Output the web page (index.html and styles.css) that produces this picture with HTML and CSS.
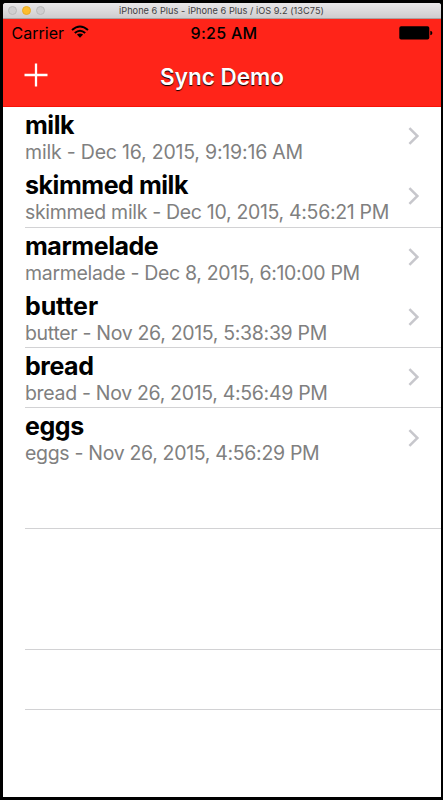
FILE: index.html
```
<!DOCTYPE html>
<html lang="en">
<head>
<meta charset="utf-8">
<title>Sync Demo</title>
<link rel="stylesheet" href="styles.css">
</head>
<body>
<svg class="defs" width="0" height="0"><defs><symbol id="chevron" viewBox="0 0 12 20"><path d="M1.4 2.1 9.4 10 1.4 17.9" fill="none" stroke="#c7c7cc" stroke-width="2.5"/></symbol></defs></svg>
<div class="window">
  <div class="titlebar">
    <div class="lights"><i></i><i class="amber"></i><i></i></div>
    <span class="window-title">iPhone 6 Plus - iPhone 6 Plus / iOS 9.2 (13C75)</span>
  </div>
  <header class="header">
    <div class="status">
      <div class="carrier"><span>Carrier</span>
        <svg width="18" height="14" viewBox="0 0 18 14"><g fill="none" stroke="#000" stroke-width="2"><path d="M1 5.1Q9-2 17 5.1"/><path d="M3.8 8.1Q9 3.5 14.2 8.1"/></g><path d="M5.9 9.6Q9 7.2 12.1 9.6L9 12.8Z"/></svg>
      </div>
      <span class="time">9:25 AM</span>
      <svg class="battery" width="34" height="14" viewBox="0 0 34 14"><rect x=".3" y=".3" width="30" height="13.2" rx="1.8"/><path d="M31.3 4.8Q33.4 5.2 33.4 7T31.3 9.2Z"/></svg>
    </div>
    <div class="nav">
      <svg class="add" width="24" height="24" viewBox="0 0 24 24"><path d="M.5 12H23.5M12 .5V23.5" stroke="#fff" stroke-width="2.3"/></svg>
      <h1>Sync Demo</h1>
    </div>
  </header>
  <main class="list">
    <div class="row"><div class="text"><h2>milk</h2><p class="loose">milk - Dec 16, 2015, 9:19:16 AM</p></div><svg class="chevron"><use href="#chevron"/></svg></div>
    <div class="row ruled"><div class="text"><h2>skimmed milk</h2><p>skimmed milk - Dec 10, 2015, 4:56:21 PM</p></div><svg class="chevron"><use href="#chevron"/></svg></div>
    <div class="row"><div class="text"><h2>marmelade</h2><p>marmelade - Dec 8, 2015, 6:10:00 PM</p></div><svg class="chevron"><use href="#chevron"/></svg></div>
    <div class="row ruled"><div class="text"><h2 class="loose">butter</h2><p>butter - Nov 26, 2015, 5:38:39 PM</p></div><svg class="chevron"><use href="#chevron"/></svg></div>
    <div class="row ruled"><div class="text"><h2>bread</h2><p>bread - Nov 26, 2015, 4:56:49 PM</p></div><svg class="chevron"><use href="#chevron"/></svg></div>
    <div class="row"><div class="text"><h2>eggs</h2><p>eggs - Nov 26, 2015, 4:56:29 PM</p></div><svg class="chevron"><use href="#chevron"/></svg></div>
    <div class="row ruled"></div>
    <div class="row"></div>
    <div class="row ruled"></div>
    <div class="row ruled"></div>
  </main>
</div>
</body>
</html>
```
FILE: styles.css
```
* { box-sizing: border-box; }
body { margin: 0; height: 800px; padding: 3px 2px 3px 3px; background: #000; font-family: Inter, "Liberation Sans", sans-serif; overflow: hidden; }
.defs { position: absolute; }
.window { height: 794px; background: #fff; border-radius: 3px 3px 0 0; overflow: hidden; }
.titlebar { height: 16px; display: grid; grid-template-columns: 116px 1fr; align-items: center; background: linear-gradient(#e9e7e9, #cfcdcf); border-bottom: 1px solid #aaa0a1; }
.lights { display: flex; gap: 5px; padding-left: 5px; }
.lights i { width: 9px; height: 9px; border-radius: 50%; background: #d0ced0; border: 1px solid #bbb9bb; }
.lights .amber { background: #fdbd2e; border-color: #e9ab29; }
.window-title { font-size: 9.2px; line-height: 15px; color: #414041; white-space: nowrap; letter-spacing: 0.03px; }
.header { height: 88px; background: #ff2419; border-bottom: 1px solid #f71308; }
.status { height: 28px; display: grid; grid-template-columns: 1fr auto 1fr; align-items: center; padding: 0 8px; font-size: 16px; line-height: 28px; color: #000; }
.carrier { display: flex; align-items: center; gap: 7px; padding-left: 0.6px; }
.carrier svg { margin-top: -2px; }
.time { font-weight: 500; letter-spacing: 0.3px; padding-left: 4px; }
.battery { justify-self: end; }
.nav { height: 59px; display: grid; grid-template-columns: 1fr auto 1fr; align-items: center; }
.add { margin: -3px 0 0 21.4px; }
h1 { margin: 0; font-size: 22.5px; font-weight: 600; line-height: 30px; color: #fff; text-shadow: 0 1px 1px #000; white-space: nowrap; }
.list { margin-top: -0.1px; }
.row { height: 60.3px; margin-left: 22px; padding-right: 21px; display: flex; justify-content: space-between; align-items: center; border-bottom: 1px solid transparent; }
.ruled { border-bottom-color: #d2d2d4; }
.text { padding-top: 0.8px; }
h2, p { margin: 0; white-space: nowrap; }
h2 { font-size: 25px; line-height: 30px; font-weight: 700; letter-spacing: -0.45px; color: #000; }
h2.loose { letter-spacing: -0.1px; }
p { font-size: 19.5px; line-height: 24px; letter-spacing: -0.32px; color: #808080; }
p.loose { letter-spacing: -0.2px; }
.chevron { width: 12px; height: 20px; flex: none; margin-top: -1px; }
```
